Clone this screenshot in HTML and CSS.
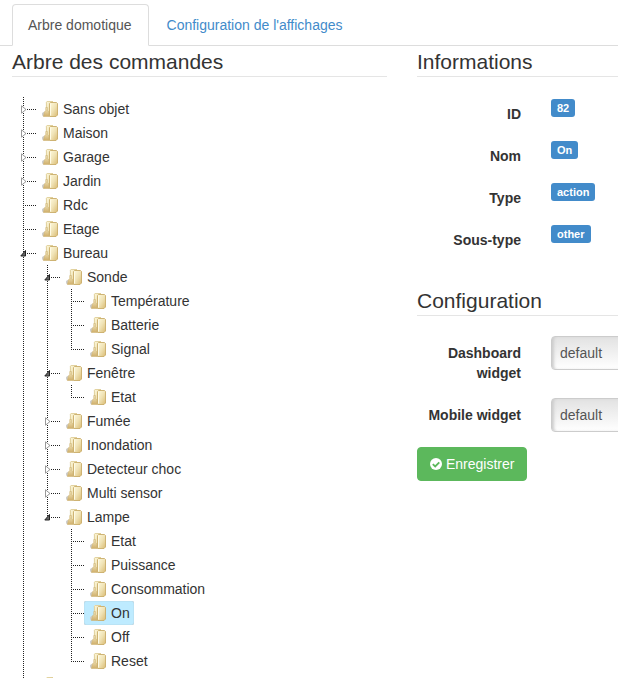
FILE: index.html
```html
<!DOCTYPE html>
<html lang="fr">
<head>
<meta charset="utf-8">
<title>Arbre domotique</title>
<link rel="stylesheet" href="styles.css">
</head>
<body>
<svg class="defs" aria-hidden="true">
  <defs>
    <linearGradient id="front" x1="0" y1="0" x2="1" y2="1">
      <stop offset="0" stop-color="#fffbe0"/><stop offset=".5" stop-color="#f0e3b6"/><stop offset="1" stop-color="#dabb72"/>
    </linearGradient>
    <linearGradient id="side" x1="0" y1="0" x2="0" y2="1">
      <stop offset="0" stop-color="#f4e9c0"/><stop offset="1" stop-color="#cfae69"/>
    </linearGradient>
    <symbol id="folder" viewBox="0 0 16 16">
      <path d="M0 12 2.500 10.500V15.500L0 14.500Z" fill="#cfcfcf"/>
      <path d="M4 1 5 0H11V14H4Z" fill="url(#front)"/>
      <path d="M4.400 13V1.200L5.200.4H11" fill="none" stroke="#d9c78f" stroke-width=".8"/>
      <path d="M1.400 15.600 2.400 11 3.800 9.500V6.500H5.400V9.500L7 11.200V15.600Z" fill="url(#side)" stroke="#cdb272" stroke-width=".6"/>
      <path d="M7.500 2.500 8.500 1.500H14.500L15.500 2.500V14L14 15.500H7.500Z" fill="url(#front)" stroke="#c9ad69" stroke-width=".9"/>
      <path d="M8.500 3V14.500" stroke="#fffbe6"/>
    </symbol>
    <symbol id="closed" viewBox="0 0 8 9">
      <path d="M1.500 .8V8.200L6 4.500Z" fill="#fff" stroke="#999"/>
    </symbol>
    <symbol id="open" viewBox="0 0 8 9">
      <path d="M.8 7H5.500V1.500Z" fill="#666" stroke="#222"/>
    </symbol>
  </defs>
</svg>
<nav class="tabs">
  <a class="tab tab-active" href="#arbre">Arbre domotique</a>
  <a class="tab" href="#affichage">Configuration de l'affichages</a>
</nav>
<main class="columns">
  <section>
    <h1 class="legend">Arbre des commandes</h1>
    <ul class="tree">
      <li><div class="row"><span class="joint"><svg class="arrow"><use href="#closed"/></svg></span><a class="node" href="#n"><svg class="folder"><use href="#folder"/></svg>Sans objet</a></div></li>
      <li><div class="row"><span class="joint"><svg class="arrow"><use href="#closed"/></svg></span><a class="node" href="#n"><svg class="folder"><use href="#folder"/></svg>Maison</a></div></li>
      <li><div class="row"><span class="joint"><svg class="arrow"><use href="#closed"/></svg></span><a class="node" href="#n"><svg class="folder"><use href="#folder"/></svg>Garage</a></div></li>
      <li><div class="row"><span class="joint"><svg class="arrow"><use href="#closed"/></svg></span><a class="node" href="#n"><svg class="folder"><use href="#folder"/></svg>Jardin</a></div></li>
      <li><div class="row"><span class="joint"></span><a class="node" href="#n"><svg class="folder"><use href="#folder"/></svg>Rdc</a></div></li>
      <li><div class="row"><span class="joint"></span><a class="node" href="#n"><svg class="folder"><use href="#folder"/></svg>Etage</a></div></li>
      <li><div class="row"><span class="joint"><svg class="arrow"><use href="#open"/></svg></span><a class="node" href="#n"><svg class="folder"><use href="#folder"/></svg>Bureau</a></div>
        <ul class="branch">
          <li><div class="row"><span class="joint"><svg class="arrow"><use href="#open"/></svg></span><a class="node" href="#n"><svg class="folder"><use href="#folder"/></svg>Sonde</a></div>
            <ul class="branch">
              <li><div class="row"><span class="joint"></span><a class="node" href="#n"><svg class="folder"><use href="#folder"/></svg>Température</a></div></li>
              <li><div class="row"><span class="joint"></span><a class="node" href="#n"><svg class="folder"><use href="#folder"/></svg>Batterie</a></div></li>
              <li><div class="row"><span class="joint"></span><a class="node" href="#n"><svg class="folder"><use href="#folder"/></svg>Signal</a></div></li>
            </ul>
          </li>
          <li><div class="row"><span class="joint"><svg class="arrow"><use href="#open"/></svg></span><a class="node" href="#n"><svg class="folder"><use href="#folder"/></svg>Fenêtre</a></div>
            <ul class="branch">
              <li><div class="row"><span class="joint"></span><a class="node" href="#n"><svg class="folder"><use href="#folder"/></svg>Etat</a></div></li>
            </ul>
          </li>
          <li><div class="row"><span class="joint"><svg class="arrow"><use href="#closed"/></svg></span><a class="node" href="#n"><svg class="folder"><use href="#folder"/></svg>Fumée</a></div></li>
          <li><div class="row"><span class="joint"><svg class="arrow"><use href="#closed"/></svg></span><a class="node" href="#n"><svg class="folder"><use href="#folder"/></svg>Inondation</a></div></li>
          <li><div class="row"><span class="joint"><svg class="arrow"><use href="#closed"/></svg></span><a class="node" href="#n"><svg class="folder"><use href="#folder"/></svg>Detecteur choc</a></div></li>
          <li><div class="row"><span class="joint"><svg class="arrow"><use href="#closed"/></svg></span><a class="node" href="#n"><svg class="folder"><use href="#folder"/></svg>Multi sensor</a></div></li>
          <li><div class="row"><span class="joint"><svg class="arrow"><use href="#open"/></svg></span><a class="node" href="#n"><svg class="folder"><use href="#folder"/></svg>Lampe</a></div>
            <ul class="branch">
              <li><div class="row"><span class="joint"></span><a class="node" href="#n"><svg class="folder"><use href="#folder"/></svg>Etat</a></div></li>
              <li><div class="row"><span class="joint"></span><a class="node" href="#n"><svg class="folder"><use href="#folder"/></svg>Puissance</a></div></li>
              <li><div class="row"><span class="joint"></span><a class="node" href="#n"><svg class="folder"><use href="#folder"/></svg>Consommation</a></div></li>
              <li><div class="row"><span class="joint"></span><a class="node node-selected" href="#n"><svg class="folder"><use href="#folder"/></svg>On</a></div></li>
              <li><div class="row"><span class="joint"></span><a class="node" href="#n"><svg class="folder"><use href="#folder"/></svg>Off</a></div></li>
              <li><div class="row"><span class="joint"></span><a class="node" href="#n"><svg class="folder"><use href="#folder"/></svg>Reset</a></div></li>
            </ul>
          </li>
        </ul>
      </li>
      <li><div class="row"><span class="joint"></span><a class="node" href="#n"><svg class="folder"><use href="#folder"/></svg></a></div></li>
    </ul>
  </section>
  <section>
    <h2 class="legend">Informations</h2>
    <dl class="form">
      <div class="field"><dt class="label">ID</dt><dd class="value"><span class="badge">82</span></dd></div>
      <div class="field"><dt class="label">Nom</dt><dd class="value"><span class="badge">On</span></dd></div>
      <div class="field"><dt class="label">Type</dt><dd class="value"><span class="badge">action</span></dd></div>
      <div class="field"><dt class="label">Sous-type</dt><dd class="value"><span class="badge">other</span></dd></div>
    </dl>
    <h2 class="legend">Configuration</h2>
    <form class="form">
      <div class="field"><label class="label" for="dashboard">Dashboard widget</label><select class="select" id="dashboard"><option>default</option></select></div>
      <div class="field"><label class="label" for="mobile">Mobile widget</label><select class="select" id="mobile"><option>default</option></select></div>
      <button class="save" type="button"><svg class="check" viewBox="0 0 12 12"><circle cx="6" cy="6" r="6" fill="#fff"/><path d="M2.800 6.200 5.200 8.500 9.300 4.300" fill="none" stroke="#5cb85c" stroke-width="1.800"/></svg>Enregistrer</button>
    </form>
  </section>
</main>
</body>
</html>
```

FILE: styles.css
```css
* {
  box-sizing: border-box;
}

body {
  margin: 0;
  height: 100vh;
  overflow: hidden;
  background: #fff;
  color: #333;
  font: 14px/20px "Liberation Sans", Arial, sans-serif;
}

.defs {
  position: absolute;
  width: 0;
  height: 0;
}

.tabs {
  display: flex;
  padding: 4px 0 0 12px;
  height: 46px;
  border-bottom: 1px solid #ddd;
}

.tab {
  height: 42px;
  padding: 10px 16px 10px 15px;
  border: 1px solid transparent;
  border-radius: 4px 4px 0 0;
  margin-right: 2px;
  color: #428bca;
  text-decoration: none;
  white-space: nowrap;
}

.tab-active {
  color: #555;
  background: #fff;
  border-color: #ddd;
  border-bottom-color: #fff;
}

.columns {
  display: grid;
  grid-template-columns: minmax(0, 1fr) 201px;
  column-gap: 30px;
  padding-left: 12px;
}

.legend {
  margin: 0 0 20px;
  height: 31px;
  border-bottom: 1px solid #e5e5e5;
  font-size: 21px;
  font-weight: 400;
  line-height: 31px;
  white-space: nowrap;
}

.tree,
.branch {
  margin: 0;
  padding: 0;
  list-style: none;
}

.branch {
  padding-left: 24px;
}

.tree li {
  background: repeating-linear-gradient(#222 0 1px, transparent 1px 2px) 11px 0 / 1px 100% no-repeat;
}

.branch > li:last-child {
  background-size: 1px 13px;
}

.row {
  display: flex;
  height: 24px;
}

.joint {
  display: flex;
  align-items: center;
  width: 24px;
  padding-left: 8px;
  background: repeating-linear-gradient(90deg, #222 0 1px, transparent 1px 2px) 13px 12px / 11px 1px no-repeat;
}

.arrow {
  width: 8px;
  height: 9px;
}

.node {
  display: flex;
  align-items: center;
  padding: 0 4px 0 6px;
  gap: 5px;
  border-radius: 2px;
  color: #333;
  text-decoration: none;
  white-space: nowrap;
}

.node-selected {
  background: #beebff;
  box-shadow: inset 0 0 1px #999;
}

.folder {
  width: 16px;
  height: 16px;
}

.form {
  display: flex;
  flex-direction: column;
  gap: 15px;
  margin: 0 0 35px;
}

.field {
  display: grid;
  grid-template-columns: 104px minmax(0, 1fr);
  column-gap: 30px;
  align-items: start;
}

.label {
  padding-top: 7px;
  font-weight: 700;
  text-align: right;
}

.value {
  margin: 0;
  padding-top: 2px;
  display: flex;
}

.badge {
  padding: 0 6px;
  border-radius: 3px;
  background: #428bca;
  color: #fff;
  font-size: 11px;
  font-weight: 700;
  line-height: 18px;
}

.select {
  appearance: none;
  width: calc(100% + 24px);
  height: 34px;
  padding: 0 8px;
  border: 1px solid #ccc;
  border-radius: 4px;
  background: linear-gradient(#e2e2e2, #fff);
  box-shadow: inset 3px 0 3px -1px #ccc;
  color: #555;
  font: inherit;
}

.save {
  display: flex;
  align-items: center;
  align-self: flex-start;
  gap: 4px;
  height: 34px;
  padding: 0 12px;
  border: 1px solid #5cb85c;
  border-radius: 4px;
  background: #5cb85c;
  color: #fff;
  font: inherit;
}

.check {
  width: 12px;
  height: 12px;
}
```
